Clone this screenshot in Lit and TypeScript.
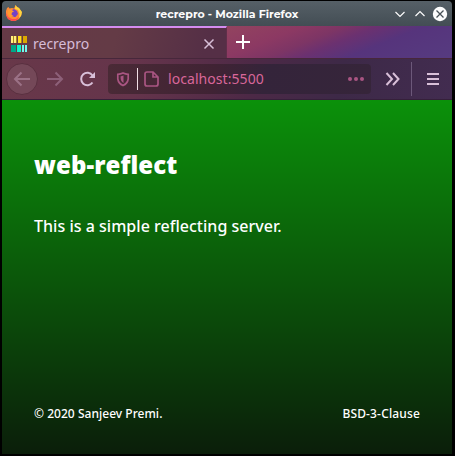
import { LitElement, html, css } from "lit";
import { customElement } from "lit/decorators.js";

@customElement("app-root")
export class AppRoot extends LitElement {
  static styles = css`
    :host {
      display: block;
      box-sizing: border-box;
      width: 455px;
      height: 456px;
      padding: 1px 3px 2px 2px;
      background: #000;
      font-family: "Noto Sans", sans-serif;
    }
    * { box-sizing: border-box; }
    svg { display: block; flex: none; }
    .window {
      display: flex;
      flex-direction: column;
      height: 453px;
      border-radius: 4px 4px 0 0;
      overflow: hidden;
    }
    .title {
      height: 25px;
      flex: none;
      display: grid;
      grid-template-columns: 60px 1fr 60px;
      align-items: center;
      background: linear-gradient(#566067, #434d54);
      color: #fcfcfc;
      font: 700 11px/24px Montserrat, "Noto Sans", sans-serif;
    }
    .fox { margin: -1px 0 0 3px; }
    .caption { text-align: center; white-space: nowrap; }
    .chrome { flex: none; height: 74px; }
    .tabs {
      display: flex;
      height: 32px;
      background: linear-gradient(158deg, #93445f 42%, #8c3963 57%, #7d3565 65%, #6b3170 71%, #56347c 80%, #563b80 100%);
    }
    .tab {
      width: 225px;
      display: flex;
      align-items: center;
      padding: 1px 11px 0 9px;
      border-top: 2px solid #d58cf0;
      border-right: 1px solid #5f2f4a;
      background: linear-gradient(105deg, #653a46, #643b46 50%, #552f46 90%);
      color: #d6bcd8;
      font-size: 14px;
    }
    .label { flex: 1; padding-left: 6px; line-height: 20px; }
    .plus { margin: 8px 0 0 9px; }
    .nav {
      display: flex;
      align-items: center;
      height: 42px;
      border-top: 1px solid #47273b;
      background: linear-gradient(100deg, #683849 0%, #65344b 30%, #4d2946 55%, #3d2947 75%, #422c50 100%);
      border-bottom: 1px solid #35203a;
    }
    .url {
      display: flex;
      align-items: center;
      width: 263px;
      height: 30px;
      margin-left: 10px;
      border-radius: 4px;
      background: linear-gradient(100deg, #4a2a36, #402334 40%, #34243a 60%, #36253a);
      color: #d9679a;
      font-size: 14px;
      padding: 0 7px 0 8px;
    }
    .address { flex: 1; padding-left: 8px; line-height: 20px; letter-spacing: 0.06px; }
    .page {
      flex: 1;
      display: flex;
      flex-direction: column;
      padding: 0 32px;
      background: linear-gradient(#0b910a, #0b1e0a);
      color: #fff;
    }
    h1 {
      margin: 47px 0 0;
      font: 800 24px/36px "Open Sans", sans-serif;
      letter-spacing: 0.1px;
    }
    p { margin: 31px 0 0; font: 500 16px/24px "Noto Sans", sans-serif; letter-spacing: 0.02px; }
    footer {
      margin: auto 0 31px;
      display: flex;
      justify-content: space-between;
      font: 500 12px/18px "Noto Sans", sans-serif;
    }
    .copyright { letter-spacing: 0.03px; }
    .license { letter-spacing: 0.15px; }
  `;

  render() {
    return html`
      <div class="window">
        <div class="title">
          <svg class="fox" width="18" height="18" viewBox="0 0 18 18">
            <path d="M2 4L3.500 3L4.500 4.500L7 4L9 4.500L10.500 1L12 3L14 4L16.500 8V11L14 15L10 17H7L3 15L1 11V7Z" fill="#ff8a35"/>
            <path d="M10.500 1L12 3L14 4L17 8L16 12L14 14L14.500 10L13 6L10 5Z" fill="#ffd53f"/>
            <path d="M1 9L3 13L7 15L11 15L14 13L12 16L9.500 17H7L3 15L1 11Z" fill="#ff4b4b"/>
            <path d="M6 6.500L9 5L12 7L13 10L10.500 13H7.500L5 10.500Z" fill="#7542c5"/>
            <path d="M3 6L6 5.500L9 7.500L7 8.500L6.500 10.500L9 12.500L5 13L3 10Z" fill="#ff9a2e"/>
          </svg>
          <span class="caption">recrepro - Mozilla Firefox</span>
          <svg width="60" height="24" viewBox="0 0 60 24" fill="none" stroke="#fcfcfc" stroke-width="1.2">
            <path d="M3.500 10L8 14.500L12.500 10M23.500 14L28 9.500L32.500 14"/>
            <circle cx="48" cy="12" r="7.200" fill="#fcfcfc" stroke="none"/>
            <path d="M44.500 8.500L51.500 15.500M51.500 8.500L44.500 15.500" stroke="#475057" stroke-width="1.300"/>
          </svg>
        </div>
        <div class="chrome">
          <div class="tabs">
            <div class="tab">
              <svg width="16" height="16" viewBox="0 0 16 16" shape-rendering="crispEdges">
                <path d="M0 0h2v7H0zM3 0h2v7H3z" fill="#fff080"/>
                <path d="M2 0h1v7H2zM5 0h1v7H5zM10 0h1v7h-1z" fill="#a88220"/>
                <path d="M7 0h3v7H7z" fill="#ffdc20"/>
                <path d="M12 0h4v7h-4z" fill="#dba800"/>
                <path d="M0 9h5v7H0z" fill="#00a888"/>
                <path d="M6 9h4v7H6z" fill="#10f5cc"/>
                <path d="M11 9h2v7h-2zM14 9h2v7h-2z" fill="#70f8ee"/>
              </svg>
              <span class="label">recrepro</span>
              <svg width="12" height="12" viewBox="0 0 12 12" fill="none" stroke="#d8bfd8" stroke-width="1.500"><path d="M1.500 1.500L10.500 10.500M10.500 1.500L1.500 10.500"/></svg>
            </div>
            <svg class="plus" width="14" height="16" viewBox="0 0 14 16" stroke="#fff" stroke-width="2"><path d="M0 8H14M7 1V15"/></svg>
          </div>
          <div class="nav">
            <svg width="96" height="40" viewBox="0 0 96 40" fill="none" stroke-width="2">
              <circle cx="20" cy="20" r="15.500" fill="#744858" stroke="#5a3040" stroke-width="1"/>
              <path d="M28 20H13M19.500 13.500L13 20L19.500 26.500" stroke="#9b7286"/>
              <path d="M45 20H60M53.500 13.500L60 20L53.500 26.500" stroke="#8d6079"/>
              <path d="M90.500 23.500A6.200 6.200 0 1 1 90.500 16.500" stroke="#d8bfd8"/>
              <path d="M93 13V19H87Z" fill="#d8bfd8"/>
            </svg>
            <div class="url">
              <svg width="44" height="24" viewBox="0 0 44 24" fill="none" stroke="#a95582" stroke-width="1.700"><path d="M7 6Q9.500 7.200 12.200 7.300V12Q11.500 16.500 7 18.500Q2.500 16.500 1.800 12V7.300Q4.500 7.200 7 6Z"/><path d="M7.500 8.500V16Q4.500 14.500 4.500 9.500Z" fill="#a95582" stroke="none"/><path d="M21.500 1V23" stroke="#f0dfe4" stroke-width="1"/><path d="M31 5H37L42 10V17Q42 19 40 19H31Q29 19 29 17V7Q29 5 31 5ZM37 5V10H42"/></svg>
              <span class="address">localhost:5500</span>
              <svg width="16" height="6" viewBox="0 0 16 6" fill="#a95582"><circle cx="2" cy="3" r="2"/><circle cx="8" cy="3" r="2"/><circle cx="14" cy="3" r="2"/></svg>
            </div>
            <svg width="80" height="40" viewBox="0 0 80 40" fill="none" stroke="#d8bfd8" stroke-width="2">
              <path d="M15.500 14L21 20L15.500 26M22 14L27.500 20L22 26M56 15H68M56 20H68M56 25H68"/>
              <path d="M40.500 3V37" stroke="#6c587a" stroke-width="1"/>
            </svg>
          </div>
        </div>
        <main class="page">
          <h1>web-reflect</h1>
          <p>This is a simple reflecting server.</p>
          <footer>
            <span class="copyright">© 2020 Sanjeev Premi.</span>
            <span class="license">BSD-3-Clause</span>
          </footer>
        </main>
      </div>
    `;
  }
}
